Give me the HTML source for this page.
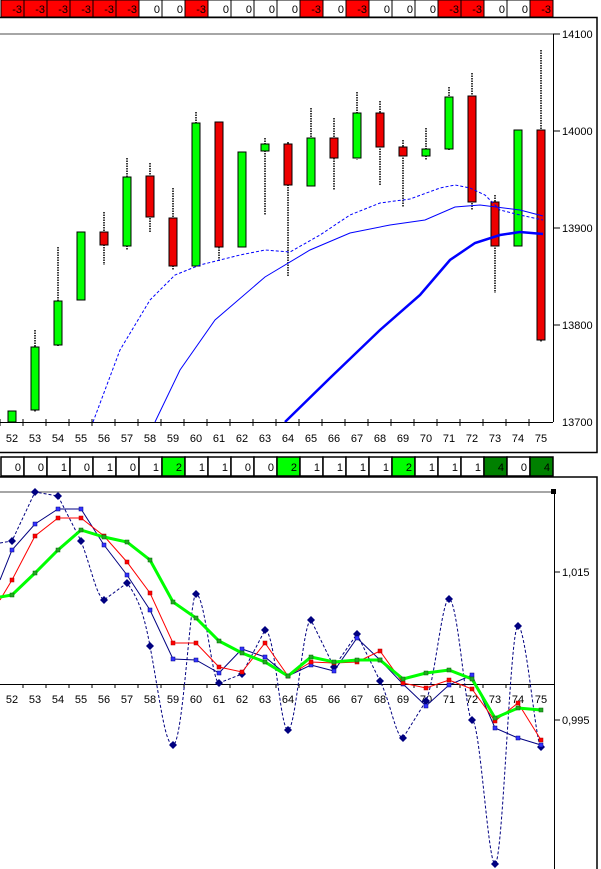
<!DOCTYPE html>
<html><head><meta charset="utf-8"><style>
html,body{margin:0;padding:0;background:#fff;width:601px;height:869px;overflow:hidden}
svg{display:block}
text{font-family:"Liberation Sans",sans-serif;font-size:11px;fill:#000}
</style></head><body>
<svg width="601" height="869" viewBox="0 0 601 869" xmlns="http://www.w3.org/2000/svg">
<!-- top strip -->
<g stroke="#000" stroke-width="1">
<rect x="1" y="0" width="23" height="17" fill="#f00"/><rect x="24" y="0" width="23" height="17" fill="#f00"/><rect x="47" y="0" width="23" height="17" fill="#f00"/><rect x="70" y="0" width="23" height="17" fill="#f00"/><rect x="93" y="0" width="23" height="17" fill="#f00"/><rect x="116" y="0" width="23" height="17" fill="#f00"/><rect x="139" y="0" width="23" height="17" fill="#fff"/><rect x="162" y="0" width="23" height="17" fill="#fff"/><rect x="185" y="0" width="23" height="17" fill="#f00"/><rect x="208" y="0" width="23" height="17" fill="#fff"/><rect x="231" y="0" width="23" height="17" fill="#fff"/><rect x="254" y="0" width="23" height="17" fill="#fff"/><rect x="277" y="0" width="23" height="17" fill="#fff"/><rect x="300" y="0" width="23" height="17" fill="#f00"/><rect x="323" y="0" width="23" height="17" fill="#fff"/><rect x="346" y="0" width="23" height="17" fill="#f00"/><rect x="369" y="0" width="23" height="17" fill="#fff"/><rect x="392" y="0" width="23" height="17" fill="#fff"/><rect x="415" y="0" width="23" height="17" fill="#fff"/><rect x="438" y="0" width="23" height="17" fill="#f00"/><rect x="461" y="0" width="23" height="17" fill="#f00"/><rect x="484" y="0" width="23" height="17" fill="#fff"/><rect x="507" y="0" width="23" height="17" fill="#fff"/><rect x="530" y="0" width="23" height="17" fill="#f00"/>
</g>
<g text-anchor="end" font-size="12">
<text x="22" y="13">-3</text><text x="45" y="13">-3</text><text x="68" y="13">-3</text><text x="91" y="13">-3</text><text x="114" y="13">-3</text><text x="137" y="13">-3</text><text x="160" y="13">0</text><text x="183" y="13">0</text><text x="206" y="13">-3</text><text x="229" y="13">0</text><text x="252" y="13">0</text><text x="275" y="13">0</text><text x="298" y="13">0</text><text x="321" y="13">-3</text><text x="344" y="13">0</text><text x="367" y="13">-3</text><text x="390" y="13">0</text><text x="413" y="13">0</text><text x="436" y="13">0</text><text x="459" y="13">-3</text><text x="482" y="13">-3</text><text x="505" y="13">0</text><text x="528" y="13">0</text><text x="551" y="13">-3</text>
</g>
<!-- top frame -->
<rect x="-2" y="17.5" width="599" height="435" fill="none" stroke="#000" stroke-width="1.5"/>
<line x1="0" y1="34" x2="553" y2="34" stroke="#888" stroke-width="1.5"/>
<line x1="553.5" y1="34" x2="553.5" y2="422" stroke="#000"/>
<g stroke="#000"><line x1="553" y1="34" x2="560" y2="34"/><line x1="553" y1="131" x2="560" y2="131"/><line x1="553" y1="228" x2="560" y2="228"/><line x1="553" y1="325" x2="560" y2="325"/></g>
<g><text x="562" y="38">14100</text><text x="562" y="135">14000</text><text x="562" y="232">13900</text><text x="562" y="329">13800</text><text x="562" y="426">13700</text></g>
<!-- wicks -->
<g stroke="#000" stroke-width="1.5" stroke-dasharray="1.5,1">
<line x1="35" y1="330" x2="35" y2="412"/><line x1="58" y1="247" x2="58" y2="346"/><line x1="104" y1="212" x2="104" y2="265"/><line x1="127" y1="158" x2="127" y2="250"/><line x1="150" y1="163" x2="150" y2="232"/><line x1="173" y1="188" x2="173" y2="270"/><line x1="196" y1="112" x2="196" y2="266"/><line x1="219" y1="122" x2="219" y2="262"/><line x1="265" y1="138" x2="265" y2="215"/><line x1="288" y1="142" x2="288" y2="276"/><line x1="311" y1="108" x2="311" y2="186"/><line x1="334" y1="118" x2="334" y2="190"/><line x1="357" y1="92" x2="357" y2="160"/><line x1="380" y1="101" x2="380" y2="185"/><line x1="403" y1="140" x2="403" y2="207"/><line x1="426" y1="128" x2="426" y2="160"/><line x1="449" y1="87" x2="449" y2="150"/><line x1="472" y1="73" x2="472" y2="210"/><line x1="495" y1="195" x2="495" y2="293"/><line x1="541" y1="50" x2="541" y2="342"/>
</g>
<!-- bodies -->
<g stroke="#000" stroke-width="1">
<rect x="8" y="411" width="8" height="11" fill="#0f0"/>
<rect x="31" y="347" width="8" height="63" fill="#0f0"/>
<rect x="54" y="301" width="8" height="44" fill="#0f0"/>
<rect x="77" y="232" width="8" height="68" fill="#0f0"/>
<rect x="100" y="232" width="8" height="13" fill="#e00"/>
<rect x="123" y="177" width="8" height="69" fill="#0f0"/>
<rect x="146" y="176" width="8" height="41" fill="#e00"/>
<rect x="169" y="218" width="8" height="48" fill="#e00"/>
<rect x="192" y="123" width="8" height="143" fill="#0f0"/>
<rect x="215" y="122" width="8" height="125" fill="#e00"/>
<rect x="238" y="152" width="8" height="95" fill="#0f0"/>
<rect x="261" y="144" width="8" height="7" fill="#0f0"/>
<rect x="284" y="144" width="8" height="41" fill="#e00"/>
<rect x="307" y="138" width="8" height="48" fill="#0f0"/>
<rect x="330" y="138" width="8" height="20" fill="#e00"/>
<rect x="353" y="113" width="8" height="45" fill="#0f0"/>
<rect x="376" y="113" width="8" height="34" fill="#e00"/>
<rect x="399" y="147" width="8" height="9" fill="#e00"/>
<rect x="422" y="149" width="8" height="7" fill="#0f0"/>
<rect x="445" y="97" width="8" height="52" fill="#0f0"/>
<rect x="468" y="96" width="8" height="106" fill="#e00"/>
<rect x="491" y="202" width="8" height="44" fill="#e00"/>
<rect x="514" y="130" width="8" height="116" fill="#0f0"/>
<rect x="537" y="130" width="8" height="210" fill="#e00"/>
</g>
<!-- MAs -->
<polyline fill="none" stroke="#00f" stroke-width="1" stroke-dasharray="3,2" points="93,422 120,350 150,300 175,275 200,265 240,255 265,250 290,252 320,235 350,215 380,203 410,199 440,188 455,185 470,188 485,195 500,210 520,215 543,220"/>
<polyline fill="none" stroke="#00f" stroke-width="1" points="155,422 180,370 215,320 265,277 310,250 350,233 390,225 425,220 455,207 480,205 520,210 543,216"/>
<polyline fill="none" stroke="#00f" stroke-width="2.5" points="285,422 330,378 380,330 420,295 450,260 475,243 500,235 520,232 543,234"/>
<!-- x axis -->
<line x1="0" y1="422.5" x2="553" y2="422.5" stroke="#000"/>
<g stroke="#000">
<line x1="0" y1="419" x2="0" y2="426"/><line x1="23" y1="419" x2="23" y2="426"/><line x1="46" y1="419" x2="46" y2="426"/><line x1="69" y1="419" x2="69" y2="426"/><line x1="92" y1="419" x2="92" y2="426"/><line x1="115" y1="419" x2="115" y2="426"/><line x1="138" y1="419" x2="138" y2="426"/><line x1="161" y1="419" x2="161" y2="426"/><line x1="184" y1="419" x2="184" y2="426"/><line x1="207" y1="419" x2="207" y2="426"/><line x1="230" y1="419" x2="230" y2="426"/><line x1="253" y1="419" x2="253" y2="426"/><line x1="276" y1="419" x2="276" y2="426"/><line x1="299" y1="419" x2="299" y2="426"/><line x1="322" y1="419" x2="322" y2="426"/><line x1="345" y1="419" x2="345" y2="426"/><line x1="368" y1="419" x2="368" y2="426"/><line x1="391" y1="419" x2="391" y2="426"/><line x1="414" y1="419" x2="414" y2="426"/><line x1="437" y1="419" x2="437" y2="426"/><line x1="460" y1="419" x2="460" y2="426"/><line x1="483" y1="419" x2="483" y2="426"/><line x1="506" y1="419" x2="506" y2="426"/><line x1="529" y1="419" x2="529" y2="426"/>
</g>
<g text-anchor="middle">
<text x="12" y="442">52</text><text x="35" y="442">53</text><text x="58" y="442">54</text><text x="81" y="442">55</text><text x="104" y="442">56</text><text x="127" y="442">57</text><text x="150" y="442">58</text><text x="173" y="442">59</text><text x="196" y="442">60</text><text x="219" y="442">61</text><text x="242" y="442">62</text><text x="265" y="442">63</text><text x="288" y="442">64</text><text x="311" y="442">65</text><text x="334" y="442">66</text><text x="357" y="442">67</text><text x="380" y="442">68</text><text x="403" y="442">69</text><text x="426" y="442">70</text><text x="449" y="442">71</text><text x="472" y="442">72</text><text x="495" y="442">73</text><text x="518" y="442">74</text><text x="541" y="442">75</text>
</g>
<!-- bottom strip -->
<g stroke="#000" stroke-width="1.5">
<rect x="1" y="457" width="23" height="19" fill="#fff"/><rect x="24" y="457" width="23" height="19" fill="#fff"/><rect x="47" y="457" width="23" height="19" fill="#fff"/><rect x="70" y="457" width="23" height="19" fill="#fff"/><rect x="93" y="457" width="23" height="19" fill="#fff"/><rect x="116" y="457" width="23" height="19" fill="#fff"/><rect x="139" y="457" width="23" height="19" fill="#fff"/><rect x="162" y="457" width="23" height="19" fill="#0f0"/><rect x="185" y="457" width="23" height="19" fill="#fff"/><rect x="208" y="457" width="23" height="19" fill="#fff"/><rect x="231" y="457" width="23" height="19" fill="#fff"/><rect x="254" y="457" width="23" height="19" fill="#fff"/><rect x="277" y="457" width="23" height="19" fill="#0f0"/><rect x="300" y="457" width="23" height="19" fill="#fff"/><rect x="323" y="457" width="23" height="19" fill="#fff"/><rect x="346" y="457" width="23" height="19" fill="#fff"/><rect x="369" y="457" width="23" height="19" fill="#fff"/><rect x="392" y="457" width="23" height="19" fill="#0f0"/><rect x="415" y="457" width="23" height="19" fill="#fff"/><rect x="438" y="457" width="23" height="19" fill="#fff"/><rect x="461" y="457" width="23" height="19" fill="#fff"/><rect x="484" y="457" width="23" height="19" fill="#008000"/><rect x="507" y="457" width="23" height="19" fill="#fff"/><rect x="530" y="457" width="23" height="19" fill="#008000"/>
</g>
<g text-anchor="end" font-size="12">
<text x="21" y="471">0</text><text x="44" y="471">0</text><text x="67" y="471">1</text><text x="90" y="471">0</text><text x="113" y="471">1</text><text x="136" y="471">0</text><text x="159" y="471">1</text><text x="182" y="471">2</text><text x="205" y="471">1</text><text x="228" y="471">1</text><text x="251" y="471">0</text><text x="274" y="471">0</text><text x="297" y="471">2</text><text x="320" y="471">1</text><text x="343" y="471">1</text><text x="366" y="471">1</text><text x="389" y="471">1</text><text x="412" y="471">2</text><text x="435" y="471">1</text><text x="458" y="471">1</text><text x="481" y="471">1</text><text x="504" y="471">4</text><text x="527" y="471">0</text><text x="550" y="471">4</text>
</g>
<!-- bottom frame -->
<rect x="-2" y="477" width="599" height="400" fill="none" stroke="#000" stroke-width="1.5"/>
<line x1="0" y1="492" x2="553" y2="492" stroke="#888" stroke-width="1.5"/>
<line x1="554.5" y1="492" x2="554.5" y2="869" stroke="#000"/>
<rect x="551" y="489" width="5" height="5" fill="#000"/>
<g stroke="#000"><line x1="554" y1="572" x2="560" y2="572"/><line x1="554" y1="720" x2="560" y2="720"/></g>
<text x="562" y="576">1,015</text><text x="562" y="724">0,995</text>
<line x1="0" y1="684.5" x2="554" y2="684.5" stroke="#000"/>
<g stroke="#000">
<line x1="23" y1="684" x2="23" y2="688"/><line x1="46" y1="684" x2="46" y2="688"/><line x1="69" y1="684" x2="69" y2="688"/><line x1="92" y1="684" x2="92" y2="688"/><line x1="115" y1="684" x2="115" y2="688"/><line x1="138" y1="684" x2="138" y2="688"/><line x1="161" y1="684" x2="161" y2="688"/><line x1="184" y1="684" x2="184" y2="688"/><line x1="207" y1="684" x2="207" y2="688"/><line x1="230" y1="684" x2="230" y2="688"/><line x1="253" y1="684" x2="253" y2="688"/><line x1="276" y1="684" x2="276" y2="688"/><line x1="299" y1="684" x2="299" y2="688"/><line x1="322" y1="684" x2="322" y2="688"/><line x1="345" y1="684" x2="345" y2="688"/><line x1="368" y1="684" x2="368" y2="688"/><line x1="391" y1="684" x2="391" y2="688"/><line x1="414" y1="684" x2="414" y2="688"/><line x1="437" y1="684" x2="437" y2="688"/><line x1="460" y1="684" x2="460" y2="688"/><line x1="483" y1="684" x2="483" y2="688"/><line x1="506" y1="684" x2="506" y2="688"/><line x1="529" y1="684" x2="529" y2="688"/>
</g>
<g text-anchor="middle">
<text x="12" y="703">52</text><text x="35" y="703">53</text><text x="58" y="703">54</text><text x="81" y="703">55</text><text x="104" y="703">56</text><text x="127" y="703">57</text><text x="150" y="703">58</text><text x="173" y="703">59</text><text x="196" y="703">60</text><text x="219" y="703">61</text><text x="242" y="703">62</text><text x="265" y="703">63</text><text x="288" y="703">64</text><text x="311" y="703">65</text><text x="334" y="703">66</text><text x="357" y="703">67</text><text x="380" y="703">68</text><text x="403" y="703">69</text><text x="426" y="703">70</text><text x="449" y="703">71</text><text x="472" y="703">72</text><text x="495" y="703">73</text><text x="518" y="703">74</text><text x="541" y="703">75</text>
</g>
<!-- dashed diamond series -->
<path fill="none" stroke="#000080" stroke-width="1" stroke-dasharray="3,2" d="M0,543 L12,541 L35,492 L58,496 L81,541 C92,570 96,595 104,600 L127,583 C140,600 145,620 150,646 C160,700 165,745 173,745 C183,745 190,594 196,594 C205,594 212,683 219,683 L242,674 L265,630 C275,630 280,730 288,730 C296,730 303,620 311,620 L334,667 L357,634 L380,681 C390,700 396,738 403,738 L426,701 C435,680 442,599 449,599 C458,599 466,720 472,720 C480,720 488,864 495,864 C503,864 510,626 518,626 C526,626 536,747 541,747"/>
<g fill="#000080">
<path d="M12,537 l4,4 -4,4 -4,-4z"/><path d="M35,488 l4,4 -4,4 -4,-4z"/><path d="M58,492 l4,4 -4,4 -4,-4z"/><path d="M81,537 l4,4 -4,4 -4,-4z"/><path d="M104,596 l4,4 -4,4 -4,-4z"/><path d="M127,579 l4,4 -4,4 -4,-4z"/><path d="M150,642 l4,4 -4,4 -4,-4z"/><path d="M173,741 l4,4 -4,4 -4,-4z"/><path d="M196,590 l4,4 -4,4 -4,-4z"/><path d="M219,679 l4,4 -4,4 -4,-4z"/><path d="M242,670 l4,4 -4,4 -4,-4z"/><path d="M265,626 l4,4 -4,4 -4,-4z"/><path d="M288,726 l4,4 -4,4 -4,-4z"/><path d="M311,616 l4,4 -4,4 -4,-4z"/><path d="M334,663 l4,4 -4,4 -4,-4z"/><path d="M357,630 l4,4 -4,4 -4,-4z"/><path d="M380,677 l4,4 -4,4 -4,-4z"/><path d="M403,734 l4,4 -4,4 -4,-4z"/><path d="M426,697 l4,4 -4,4 -4,-4z"/><path d="M449,595 l4,4 -4,4 -4,-4z"/><path d="M472,716 l4,4 -4,4 -4,-4z"/><path d="M495,860 l4,4 -4,4 -4,-4z"/><path d="M518,622 l4,4 -4,4 -4,-4z"/><path d="M541,743 l4,4 -4,4 -4,-4z"/>
</g>
<!-- blue thin -->
<polyline fill="none" stroke="#000080" stroke-width="1" points="0,580 12,550 35,524 58,509 81,509 104,545 127,575 150,610 173,659 196,660 219,673 242,649 265,657 288,676 311,665 334,671 357,638 380,660 403,684 426,706 449,685 472,675 495,728 518,738 541,745"/>
<g fill="#33f" stroke="#000080" stroke-width="0.5">
<rect x="10" y="548" width="4" height="4"/><rect x="33" y="522" width="4" height="4"/><rect x="56" y="507" width="4" height="4"/><rect x="79" y="507" width="4" height="4"/><rect x="102" y="543" width="4" height="4"/><rect x="125" y="573" width="4" height="4"/><rect x="148" y="608" width="4" height="4"/><rect x="171" y="657" width="4" height="4"/><rect x="194" y="658" width="4" height="4"/><rect x="217" y="671" width="4" height="4"/><rect x="240" y="647" width="4" height="4"/><rect x="263" y="655" width="4" height="4"/><rect x="286" y="674" width="4" height="4"/><rect x="309" y="663" width="4" height="4"/><rect x="332" y="669" width="4" height="4"/><rect x="355" y="636" width="4" height="4"/><rect x="378" y="658" width="4" height="4"/><rect x="401" y="682" width="4" height="4"/><rect x="424" y="704" width="4" height="4"/><rect x="447" y="683" width="4" height="4"/><rect x="470" y="673" width="4" height="4"/><rect x="493" y="726" width="4" height="4"/><rect x="516" y="736" width="4" height="4"/><rect x="539" y="743" width="4" height="4"/>
</g>
<!-- red -->
<polyline fill="none" stroke="#f00" stroke-width="1" points="0,600 12,580 35,536 58,518 81,518 104,536 127,562 150,593 173,643 196,643 219,667 242,672 265,643 288,676 311,662 334,663 357,662 380,651 403,683 426,688 449,680 472,689 495,721 518,703 541,740"/>
<g fill="#f00" stroke="#a00" stroke-width="0.5">
<rect x="10" y="578" width="4" height="4"/><rect x="33" y="534" width="4" height="4"/><rect x="56" y="516" width="4" height="4"/><rect x="79" y="516" width="4" height="4"/><rect x="102" y="534" width="4" height="4"/><rect x="125" y="560" width="4" height="4"/><rect x="148" y="591" width="4" height="4"/><rect x="171" y="641" width="4" height="4"/><rect x="194" y="641" width="4" height="4"/><rect x="217" y="665" width="4" height="4"/><rect x="240" y="670" width="4" height="4"/><rect x="263" y="641" width="4" height="4"/><rect x="286" y="674" width="4" height="4"/><rect x="309" y="660" width="4" height="4"/><rect x="332" y="661" width="4" height="4"/><rect x="355" y="660" width="4" height="4"/><rect x="378" y="649" width="4" height="4"/><rect x="401" y="681" width="4" height="4"/><rect x="424" y="686" width="4" height="4"/><rect x="447" y="678" width="4" height="4"/><rect x="470" y="687" width="4" height="4"/><rect x="493" y="719" width="4" height="4"/><rect x="516" y="701" width="4" height="4"/><rect x="539" y="738" width="4" height="4"/>
</g>
<!-- green thick -->
<polyline fill="none" stroke="#0f0" stroke-width="3" points="0,597 12,595 35,573 58,550 81,530 104,537 127,542 150,560 173,602 196,618 219,641 242,653 265,662 288,676 311,657 334,662 357,660 380,660 403,679 426,673 449,670 472,679 495,718 518,708 541,710"/>
<g fill="#2a2" stroke="#060" stroke-width="0.5">
<rect x="10" y="593" width="4" height="4"/><rect x="33" y="571" width="4" height="4"/><rect x="56" y="548" width="4" height="4"/><rect x="79" y="528" width="4" height="4"/><rect x="102" y="535" width="4" height="4"/><rect x="125" y="540" width="4" height="4"/><rect x="148" y="558" width="4" height="4"/><rect x="171" y="600" width="4" height="4"/><rect x="194" y="616" width="4" height="4"/><rect x="217" y="639" width="4" height="4"/><rect x="240" y="651" width="4" height="4"/><rect x="263" y="660" width="4" height="4"/><rect x="286" y="674" width="4" height="4"/><rect x="309" y="655" width="4" height="4"/><rect x="332" y="660" width="4" height="4"/><rect x="355" y="658" width="4" height="4"/><rect x="378" y="658" width="4" height="4"/><rect x="401" y="677" width="4" height="4"/><rect x="424" y="671" width="4" height="4"/><rect x="447" y="668" width="4" height="4"/><rect x="470" y="677" width="4" height="4"/><rect x="493" y="716" width="4" height="4"/><rect x="516" y="706" width="4" height="4"/><rect x="539" y="708" width="4" height="4"/>
</g>
</svg>
</body></html>
